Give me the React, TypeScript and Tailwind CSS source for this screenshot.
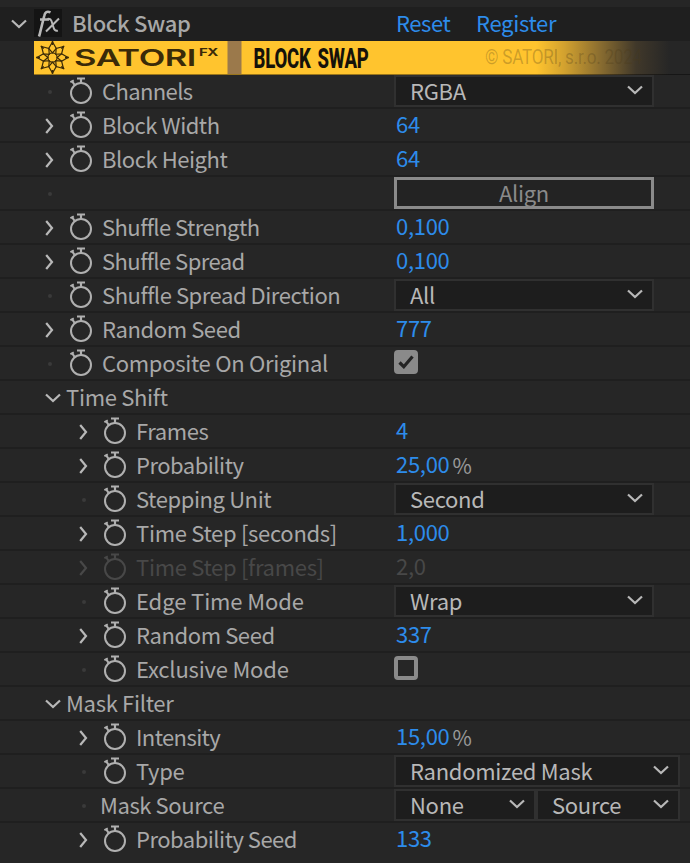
import type { ReactNode } from "react"

interface ParamRowProps {
  label?: string
  labelClass?: string
  nested?: boolean
  expandable?: boolean
  stopwatch?: boolean
  disabled?: boolean
  last?: boolean
  children?: ReactNode
}

function ChevronDown({ className = "" }: { className?: string }) {
  return (
    <svg width="16" height="10" viewBox="0 0 16 10" fill="none" stroke="currentColor" className={className}>
      <path d="M1 1.5 8 8l7-6.5" strokeWidth="2.2" />
    </svg>
  )
}

function ChevronRight() {
  return (
    <svg width="9" height="16" viewBox="0 0 9 16" fill="none" stroke="currentColor">
      <path d="M1.2 1 7 8l-5.8 7" strokeWidth="2.2" />
    </svg>
  )
}

function Stopwatch() {
  return (
    <svg width="23" height="27" viewBox="0 0 23 27" fill="none" stroke="currentColor">
      <circle cx="11" cy="16" r="10" strokeWidth="2" />
      <path d="M7 1.5h8M11 2v4" strokeWidth="2.2" />
      <path d="M.4 5.2l3.4-1.8M2.2 4.4l2.4 3.4" strokeWidth="2" />
    </svg>
  )
}

function Banner() {
  return (
    <div className="ml-[34px] flex h-[34px] border-b border-[#00000066] bg-[linear-gradient(90deg,#ffc42e_0,#ffc42e_502px,#d3a22f_530px,#8a6d30_566px,#40382a_602px,#262626_636px)]">
      <svg width="656" height="33" viewBox="0 0 656 33">
        <g transform="translate(18.5 16.5)" fill="none" stroke="#3a2a08" strokeWidth="1.2">
          <circle r="4.6" />
          {[0, 45, 90, 135, 180, 225, 270, 315].map((angle) => (
            <g key={angle} transform={`rotate(${angle})`}>
              <path d="M0-4.6 3.8-9 0-15.5-3.8-9Z" />
              <path d="M0-16.3v3.8" strokeWidth="1.6" />
            </g>
          ))}
        </g>
        <text x="40" y="25" textLength="122" lengthAdjust="spacingAndGlyphs" fontSize="23" fontWeight="600" fill="#3a2a08" className="font-['Inter',sans-serif]">
          SATORI
        </text>
        <text x="165" y="15" textLength="19" lengthAdjust="spacingAndGlyphs" fontSize="10" fontWeight="700" fill="#3a2a08" className="font-['Inter',sans-serif]">
          FX
        </text>
        <rect x="193.5" width="14" height="33" fill="#9b794b" />
        <text x="219.5" y="27" textLength="115" lengthAdjust="spacingAndGlyphs" fontSize="28" fontWeight="800" fill="#15120a" className="font-['Roboto',sans-serif] [word-spacing:4px]">
          BLOCK SWAP
        </text>
        <text x="451" y="23" textLength="157" lengthAdjust="spacingAndGlyphs" fontSize="20" fill="#4a3a18" fillOpacity=".28" className="font-['Roboto',sans-serif]">
          © SATORI, s.r.o. 2024
        </text>
      </svg>
    </div>
  )
}

function ParamRow({ label, labelClass = "", nested, expandable, stopwatch = true, disabled, last, children }: ParamRowProps) {
  return (
    <div className={`flex h-[34px] items-center border-b-2 ${last ? "border-transparent" : "border-[#1f1f1f]"} ${disabled ? "text-[#484848]" : "text-[#a8a8a8]"}`}>
      <div className={`flex w-[394px] shrink-0 items-center ${nested ? "pl-[79px]" : "pl-[45px]"}`}>
        <div className={`mt-0.5 flex w-[25px] shrink-0 ${disabled ? "" : "text-[#b8b8b8]"}`}>
          {expandable ? <ChevronRight /> : <span className="ml-[3px] size-1 rounded-full bg-[#3a3a3a]" />}
        </div>
        {label && stopwatch && (
          <div className={`mb-0.5 flex w-8 shrink-0 ${disabled ? "" : "text-[#b0b0b0]"}`}>
            <Stopwatch />
          </div>
        )}
        {label && <span className={`mb-0.5 whitespace-nowrap leading-8 ${stopwatch ? "" : "-ml-1"} ${labelClass}`}>{label}</span>}
      </div>
      {children}
    </div>
  )
}

function GroupRow({ label }: { label: string }) {
  return (
    <div className="flex h-[34px] items-center border-b-2 border-[#1f1f1f] pl-[45px] text-[#a8a8a8]">
      <ChevronDown className="mt-0.5 text-[#b8b8b8]" />
      <span className="mb-0.5 ml-[5px] leading-8">{label}</span>
    </div>
  )
}

function Value({ children, unit, disabled }: { children: string; unit?: string; disabled?: boolean }) {
  return (
    <div className="mb-1 flex pl-0.5 leading-8">
      <span className={disabled ? "" : "text-[#2d8ceb]"}>{children}</span>
      {unit && <span className="mt-0.5 -mb-0.5 ml-[3px] text-[21px] text-[#999999]">{unit}</span>}
    </div>
  )
}

function Select({ value, width = "w-[260px]" }: { value: string; width?: string }) {
  return (
    <button className={`flex h-8 shrink-0 items-center justify-between border-2 border-[#303030] bg-[#1d1d1d] pr-[9px] pl-3.5 text-[#b8b8b8] ${width}`}>
      <span className="mb-0.5 leading-7">{value}</span>
      <ChevronDown className="mb-0.5" />
    </button>
  )
}

function Checkbox({ checked }: { checked?: boolean }) {
  return (
    <div className={`mb-0.5 flex size-6 items-center justify-center rounded border-4 border-[#8a8a8a] ${checked ? "bg-[#8a8a8a]" : ""}`}>
      {checked && (
        <svg width="16" height="14" viewBox="0 0 16 14" fill="none" className="shrink-0">
          <path d="M1.5 7.5l4.3 4.2L14.5 1.5" stroke="#242424" strokeWidth="3.2" />
        </svg>
      )}
    </div>
  )
}

export default function App() {
  return (
    <div className="h-[863px] w-[690px] overflow-hidden bg-[#262626] pt-[7px] font-['Noto_Sans_CJK_SC',sans-serif] text-[22px] tracking-[-0.3px]">
      <div className="flex h-[34px] items-center bg-[#1f1f1f]">
        <ChevronDown className="ml-[11px] text-[#b8b8b8]" />
        <div className="mb-0.5 ml-[7px] flex h-7 w-7 items-center justify-center bg-[#141414]">
          <svg width="26" height="27" viewBox="0 0 26 27" fill="none" stroke="#b8b8b8">
            <path d="M15.5 2.4Q10.4 0 9.2 6L5.6 20.5q-.7 3.5-1.6 6M5 9.5h9" strokeWidth="2.6" />
            <path d="M12.5 9q3-.8 4 2l2.2 7q1 3.4 4.2 2.6M24 8.5 11 21.5" strokeWidth="2" />
          </svg>
        </div>
        <span className="mb-1 ml-2.5 w-[324px] font-medium text-[#a8a8a8]">Block Swap</span>
        <span className="mb-1 w-20 tracking-[-0.4px] text-[#2d8ceb]">Reset</span>
        <span className="mb-1 text-[#2d8ceb]">Register</span>
      </div>
      <Banner />
      <ParamRow label="Channels" labelClass="tracking-[-0.6px]">
        <Select value="RGBA" />
      </ParamRow>
      <ParamRow label="Block Width" labelClass="tracking-[-0.5px]" expandable>
        <Value>64</Value>
      </ParamRow>
      <ParamRow label="Block Height" labelClass="tracking-[-0.45px]" expandable>
        <Value>64</Value>
      </ParamRow>
      <ParamRow>
        <button className="h-8 w-[260px] border-3 border-[#8a8a8a] bg-[#232323] pb-1 leading-6 text-[#8a8a8a]">Align</button>
      </ParamRow>
      <ParamRow label="Shuffle Strength" labelClass="tracking-[-0.55px]" expandable>
        <Value>0,100</Value>
      </ParamRow>
      <ParamRow label="Shuffle Spread" labelClass="tracking-[-0.55px]" expandable>
        <Value>0,100</Value>
      </ParamRow>
      <ParamRow label="Shuffle Spread Direction" labelClass="tracking-[-0.45px]">
        <Select value="All" />
      </ParamRow>
      <ParamRow label="Random Seed" labelClass="tracking-[-0.4px]" expandable>
        <Value>777</Value>
      </ParamRow>
      <ParamRow label="Composite On Original">
        <Checkbox checked />
      </ParamRow>

      <GroupRow label="Time Shift" />
      <ParamRow nested label="Frames" labelClass="tracking-[-0.4px]" expandable>
        <Value>4</Value>
      </ParamRow>
      <ParamRow nested label="Probability" labelClass="tracking-[-0.5px]" expandable>
        <Value unit="%">25,00</Value>
      </ParamRow>
      <ParamRow nested label="Stepping Unit" labelClass="tracking-[-0.4px]">
        <Select value="Second" />
      </ParamRow>
      <ParamRow nested label="Time Step [seconds]" expandable>
        <Value>1,000</Value>
      </ParamRow>
      <ParamRow nested label="Time Step [frames]" expandable disabled>
        <Value disabled>2,0</Value>
      </ParamRow>
      <ParamRow nested label="Edge Time Mode" labelClass="tracking-[-0.1px]">
        <Select value="Wrap" />
      </ParamRow>
      <ParamRow nested label="Random Seed" labelClass="tracking-[-0.4px]" expandable>
        <Value>337</Value>
      </ParamRow>
      <ParamRow nested label="Exclusive Mode" labelClass="tracking-[-0.2px]">
        <Checkbox />
      </ParamRow>

      <GroupRow label="Mask Filter" />
      <ParamRow nested label="Intensity" labelClass="tracking-[-0.6px]" expandable>
        <Value unit="%">15,00</Value>
      </ParamRow>
      <ParamRow nested label="Type">
        <Select value="Randomized Mask" width="w-[286px]" />
      </ParamRow>
      <ParamRow nested label="Mask Source" stopwatch={false} labelClass="tracking-[-0.4px]">
        <Select value="None" width="w-[142px]" />
        <Select value="Source" width="w-[144px]" />
      </ParamRow>
      <ParamRow nested label="Probability Seed" labelClass="tracking-[-0.5px]" expandable last>
        <Value>133</Value>
      </ParamRow>
    </div>
  )
}
